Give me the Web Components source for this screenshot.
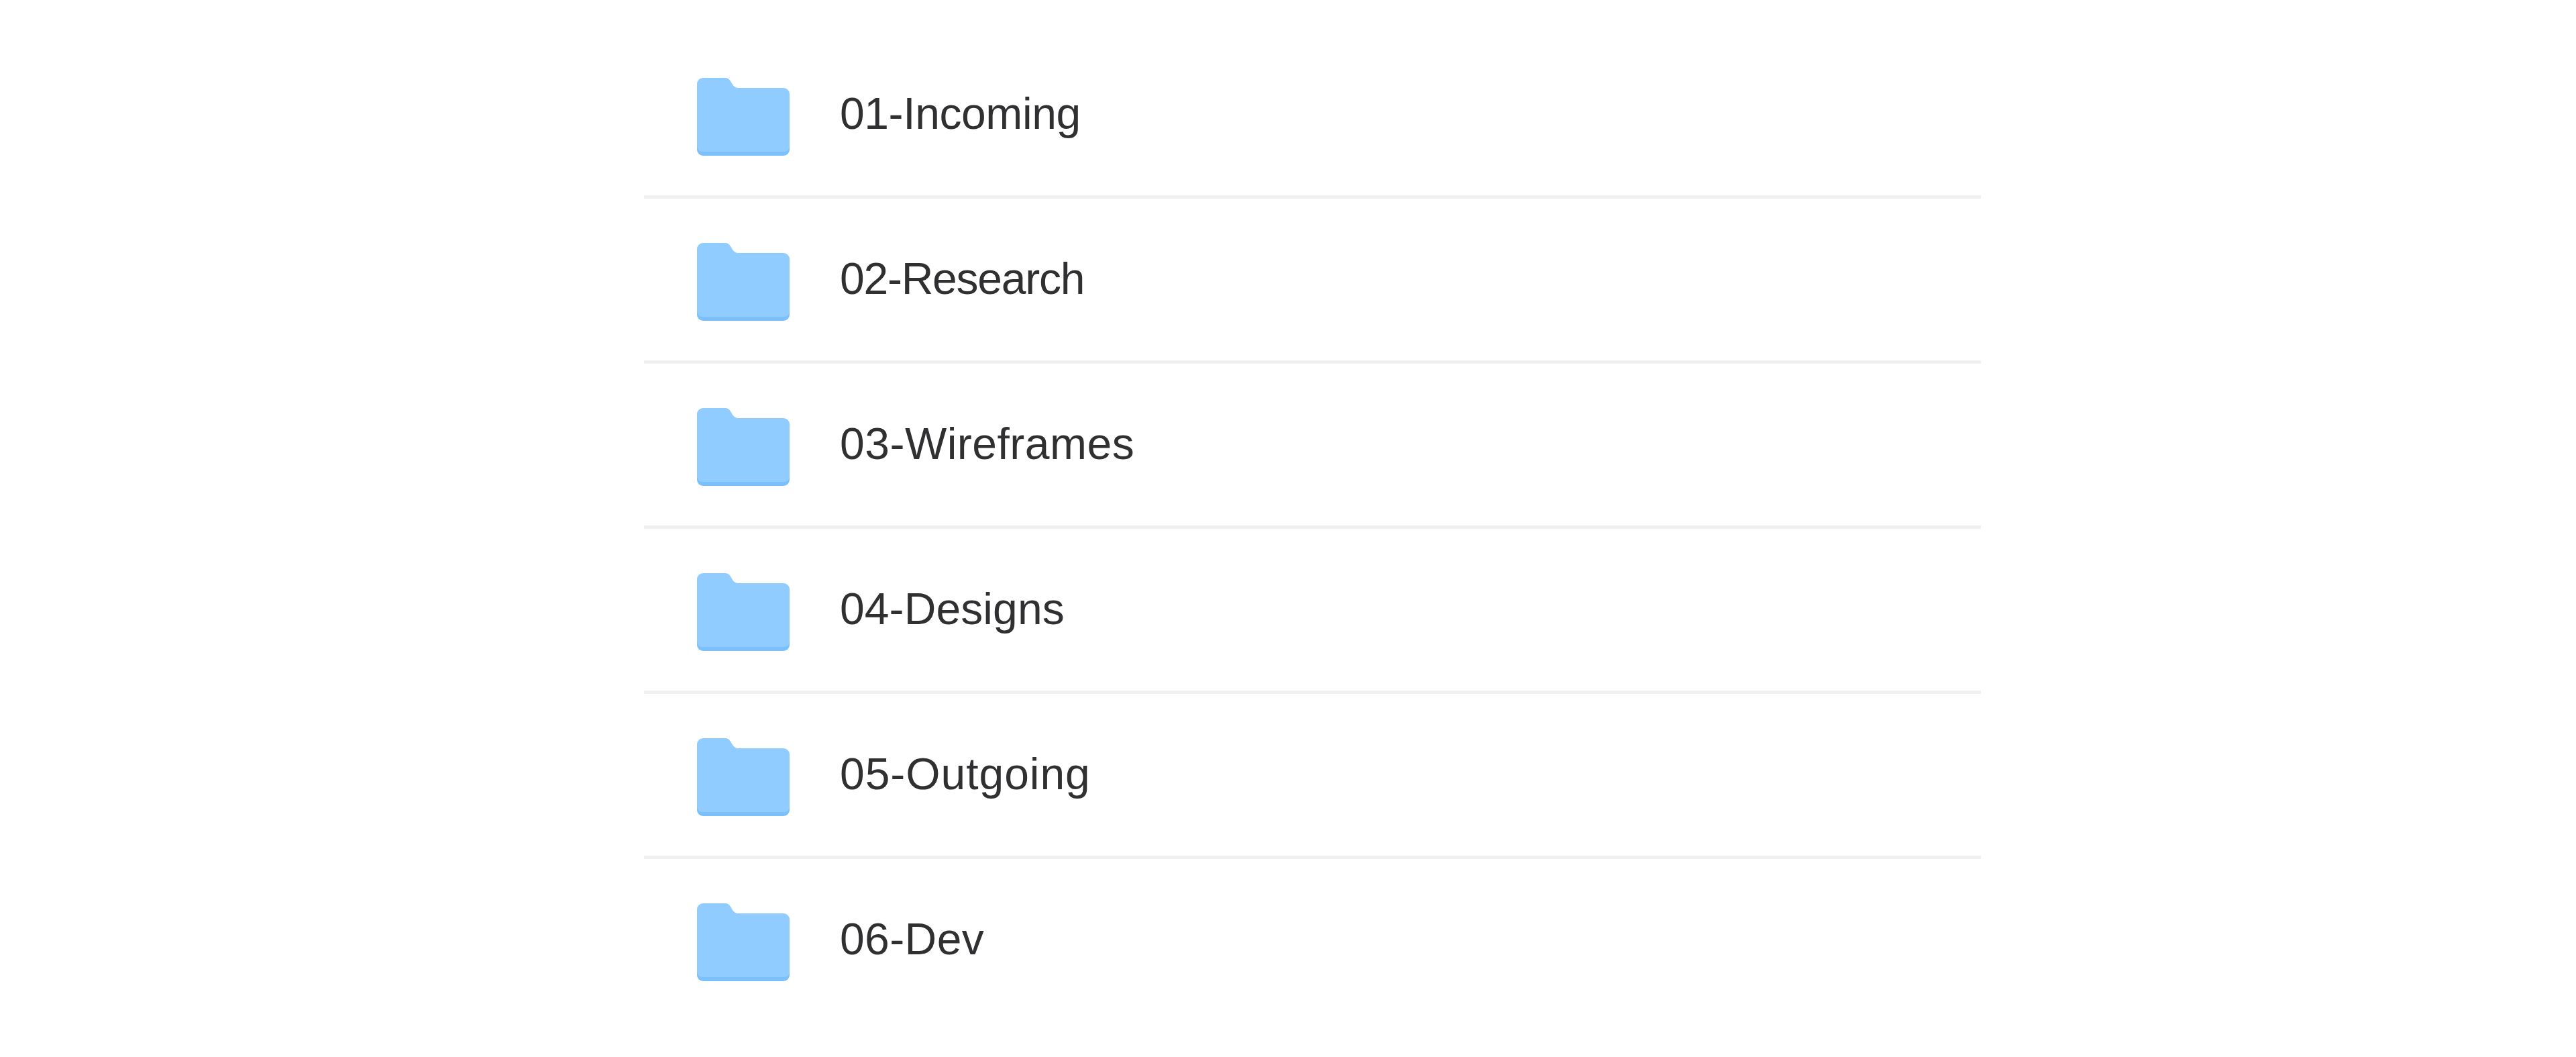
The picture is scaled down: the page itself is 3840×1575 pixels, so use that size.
<!DOCTYPE html>
<html>
<head>
<meta charset="utf-8">
<title>Folders</title>
<style>
    html, body { margin: 0; background: #fff; }
    body { font-family: "Liberation Sans", Arial, sans-serif; color: #303032; }
    folder-row:nth-child(1) { --track: -0.4px; }
    folder-row:nth-child(2) { --track: -1.25px; }
    folder-row:nth-child(3) { --track: 0.5px; }
    folder-row:nth-child(4) { --track: 0.1px; }
    folder-row:nth-child(5) { --track: 0.95px; }
    folder-row:nth-child(6) { --track: 0.4px; }
</style>
</head>
<body>
<folder-list>
    <folder-row>01-Incoming</folder-row>
    <folder-row>02-Research</folder-row>
    <folder-row>03-Wireframes</folder-row>
    <folder-row>04-Designs</folder-row>
    <folder-row>05-Outgoing</folder-row>
    <folder-row>06-Dev</folder-row>
</folder-list>
<script>
const listTemplate = document.createElement('template');
listTemplate.innerHTML = `
    <style>
        :host {
            display: flex;
            flex-direction: column;
            width: 1993px;
            margin-left: 960px;
            padding-top: 50px;
        }
    </style>
    <slot></slot>
`;

class FolderList extends HTMLElement {
    constructor() {
        super();
        this.attachShadow({mode: 'open'}).appendChild(listTemplate.content.cloneNode(true));
    }
}

const rowTemplate = document.createElement('template');
rowTemplate.innerHTML = `
    <style>
        :host {
            display: flex;
            align-items: center;
            box-sizing: border-box;
            height: 246px;
            padding: 7px 0 0 79px;
            border-bottom: 5px solid #f0f0f2;
        }
        :host(:last-child) {
            border-bottom-color: transparent;
        }
        svg {
            flex: none;
            display: block;
            width: 138px;
            height: 116px;
        }
        .name {
            margin: 0 0 10px 75px;
            font-size: 66px;
            line-height: 76px;
            letter-spacing: var(--track, 0);
        }
    </style>
    <svg viewBox="0 0 138 116" aria-hidden="true">
        <path fill="#7cc0fb" d="M0 90h138v17a9 9 0 0 1-9 9H9a9 9 0 0 1-9-9z"/>
        <path fill="#90ccff" d="M0 9a9 9 0 0 1 9-9h33q5 0 8 5l3 5q3 5 9 5h67a9 9 0 0 1 9 9v77q0 9-9 9H9q-9 0-9-9z"/>
    </svg>
    <span class="name"><slot></slot></span>
`;

class FolderRow extends HTMLElement {
    constructor() {
        super();
        this.attachShadow({mode: 'open'}).appendChild(rowTemplate.content.cloneNode(true));
    }
}

customElements.define('folder-list', FolderList);
customElements.define('folder-row', FolderRow);
</script>
</body>
</html>
